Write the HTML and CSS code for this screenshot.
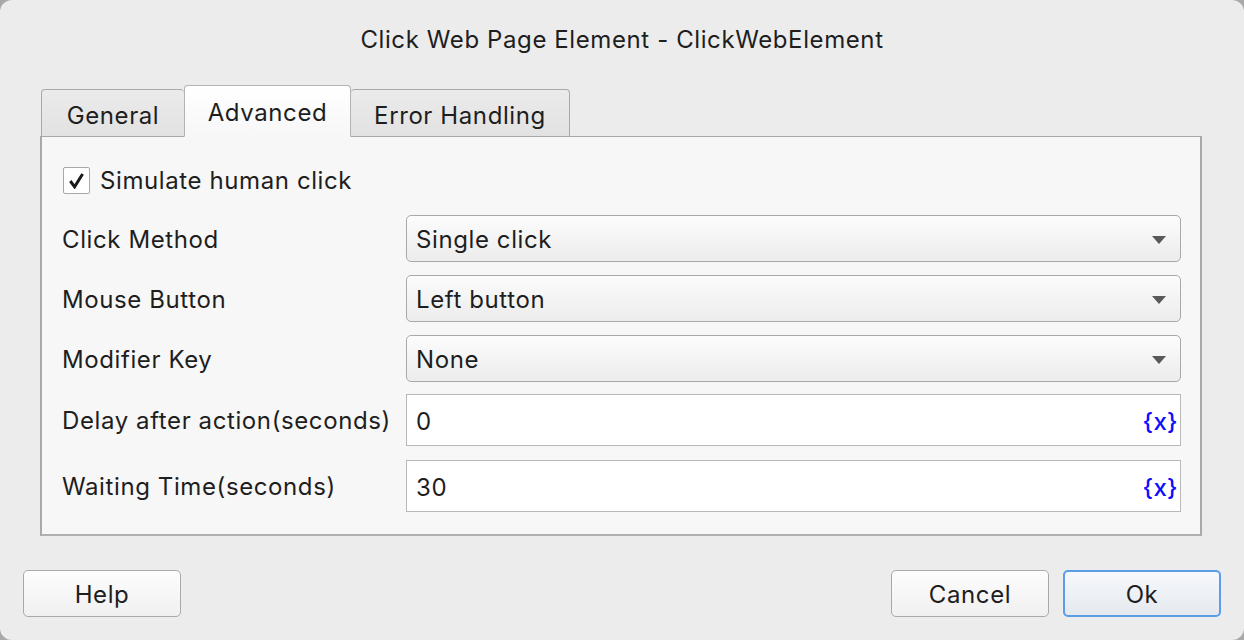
FILE: index.html
```html
<!DOCTYPE html>
<html>
<head>
<meta charset="utf-8">
<link rel="stylesheet" href="styles.css">
</head>
<body>
<div class="dialog">
  <div class="title">Click Web Page Element - ClickWebElement</div>
  <div class="tabs">
    <div class="tab tab-general">General</div>
    <div class="tab tab-active">Advanced</div>
    <div class="tab tab-error">Error Handling</div>
  </div>
  <div class="panel">
    <div class="check-row">
      <span class="checkbox"><svg width="17" height="17" viewBox="0 0 17 17"><path d="M2.3 9.0 L6.6 14.8 L14.6 2.0" fill="none" stroke="#1a1a1a" stroke-width="3" stroke-linejoin="miter" stroke-linecap="butt"/></svg></span>
      <span class="check-label">Simulate human click</span>
    </div>
    <div class="form">
      <div class="label r1">Click Method</div>
      <div class="select r1"><span>Single click</span><span class="arrow"></span></div>
      <div class="label r2">Mouse Button</div>
      <div class="select r2"><span>Left button</span><span class="arrow"></span></div>
      <div class="label r3">Modifier Key</div>
      <div class="select r3"><span>None</span><span class="arrow"></span></div>
      <div class="label r4">Delay after action(seconds)</div>
      <div class="input r4"><span>0</span><span class="var">{x}</span></div>
      <div class="label r5">Waiting Time(seconds)</div>
      <div class="input r5"><span>30</span><span class="var">{x}</span></div>
    </div>
  </div>
  <div class="footer">
    <div class="btn">Help</div>
    <div class="spacer"></div>
    <div class="btn">Cancel</div>
    <div class="btn btn-primary">Ok</div>
  </div>
</div>
</body>
</html>
```
FILE: styles.css
```css
html, body {
  margin: 0;
  padding: 0;
  background: #a9a9a9;
}
body {
  width: 1244px;
  height: 640px;
  overflow: hidden;
  font-family: Inter, "Liberation Sans", Arial, sans-serif;
  letter-spacing: 0.6px;
  color: #1e1e1e;
}
.dialog {
  width: 1244px;
  height: 640px;
  background: #ececec;
  border-radius: 12px;
  box-sizing: border-box;
  display: flex;
  flex-direction: column;
}
.title {
  height: 85px;
  box-sizing: border-box;
  padding-top: 26px;
  text-align: center;
  font-size: 24px;
  line-height: 28px;
  color: #1e1e1e;
}
.tabs {
  display: flex;
  align-items: flex-end;
  padding-left: 41px;
  height: 52px;
  position: relative;
  z-index: 1;
  margin-bottom: -1px;
}
.tab {
  box-sizing: border-box;
  height: 48px;
  border: 1px solid #a9a9a9;
  border-bottom: 1px solid #a9a9a9;
  border-radius: 4px 4px 0 0;
  background: linear-gradient(#ebebeb, #e2e2e2);
  font-size: 24px;
  line-height: 28px;
  padding-top: 12px;
  text-align: center;
  color: #1e1e1e;
}
.tab-general {
  width: 143px;
  border-right: none;
}
.tab-active {
  width: 167px;
  height: 52px;
  background: linear-gradient(#ffffff, #f7f7f7);
  border-color: #b3b3b3;
  border-bottom: 1px solid #f7f7f7;
  padding-top: 13px;
}
.tab-error {
  width: 219px;
  border-left: none;
}
.panel {
  margin-left: 40px;
  width: 1162px;
  height: 400px;
  box-sizing: border-box;
  background: #f7f7f7;
  border: 1px solid #a9a9a9;
  border-left-width: 2px;
  border-right-width: 2px;
  border-bottom: 2px solid #b0b0b0;
  padding: 30px 19px 0 20px;
}
.check-row {
  display: flex;
  align-items: center;
  height: 27px;
  padding-left: 1px;
}
.checkbox {
  box-sizing: border-box;
  width: 27px;
  height: 27px;
  border: 1px solid #a8a8a8;
  border-radius: 2px;
  background: #fff;
  display: flex;
  align-items: center;
  justify-content: center;
}
.checkbox svg { display: block; }
.check-label {
  margin-left: 10px;
  font-size: 24px;
  line-height: 28px;
}
.form {
  display: grid;
  grid-template-columns: 344px 1fr;
  margin-top: 21px;
}
.label {
  font-size: 24px;
  line-height: 28px;
  align-self: center;
  padding-top: 2px;
  white-space: nowrap;
}
.select {
  box-sizing: border-box;
  height: 47px;
  border: 1px solid #a9a9a9;
  border-radius: 5px;
  background: linear-gradient(#fcfcfc, #ececec);
  display: flex;
  align-items: center;
  justify-content: space-between;
  padding: 2px 14px 0 9px;
  font-size: 24px;
}
.r2, .r3 { margin-top: 13px; }
.r4 { margin-top: 12px; }
.r5 { margin-top: 14px; }
.arrow {
  width: 0;
  height: 0;
  border-left: 7.5px solid transparent;
  border-right: 7.5px solid transparent;
  border-top: 8px solid #595959;
}
.input {
  box-sizing: border-box;
  height: 52px;
  border: 1px solid #b8b8b8;
  background: #fff;
  display: flex;
  align-items: center;
  justify-content: space-between;
  padding: 2px 2px 0 9px;
  font-size: 24px;
}
.var {
  color: #0d0dff;
  font-size: 24px;
  font-weight: 500;
  letter-spacing: 0.3px;
}
.footer {
  display: flex;
  align-items: center;
  padding: 34px 23px 0 23px;
  gap: 14px;
}
.spacer { flex: 1; }
.btn {
  box-sizing: border-box;
  width: 158px;
  height: 47px;
  border: 1px solid #a9a9a9;
  border-radius: 5px;
  background: linear-gradient(#fdfdfd, #f0f0f0);
  font-size: 24px;
  line-height: 47px;
  text-align: center;
  color: #1e1e1e;
}
.btn-primary {
  border: 2px solid #5b9de6;
  line-height: 45px;
  background: linear-gradient(#f6f8fb, #e5e9ef);
}
```
